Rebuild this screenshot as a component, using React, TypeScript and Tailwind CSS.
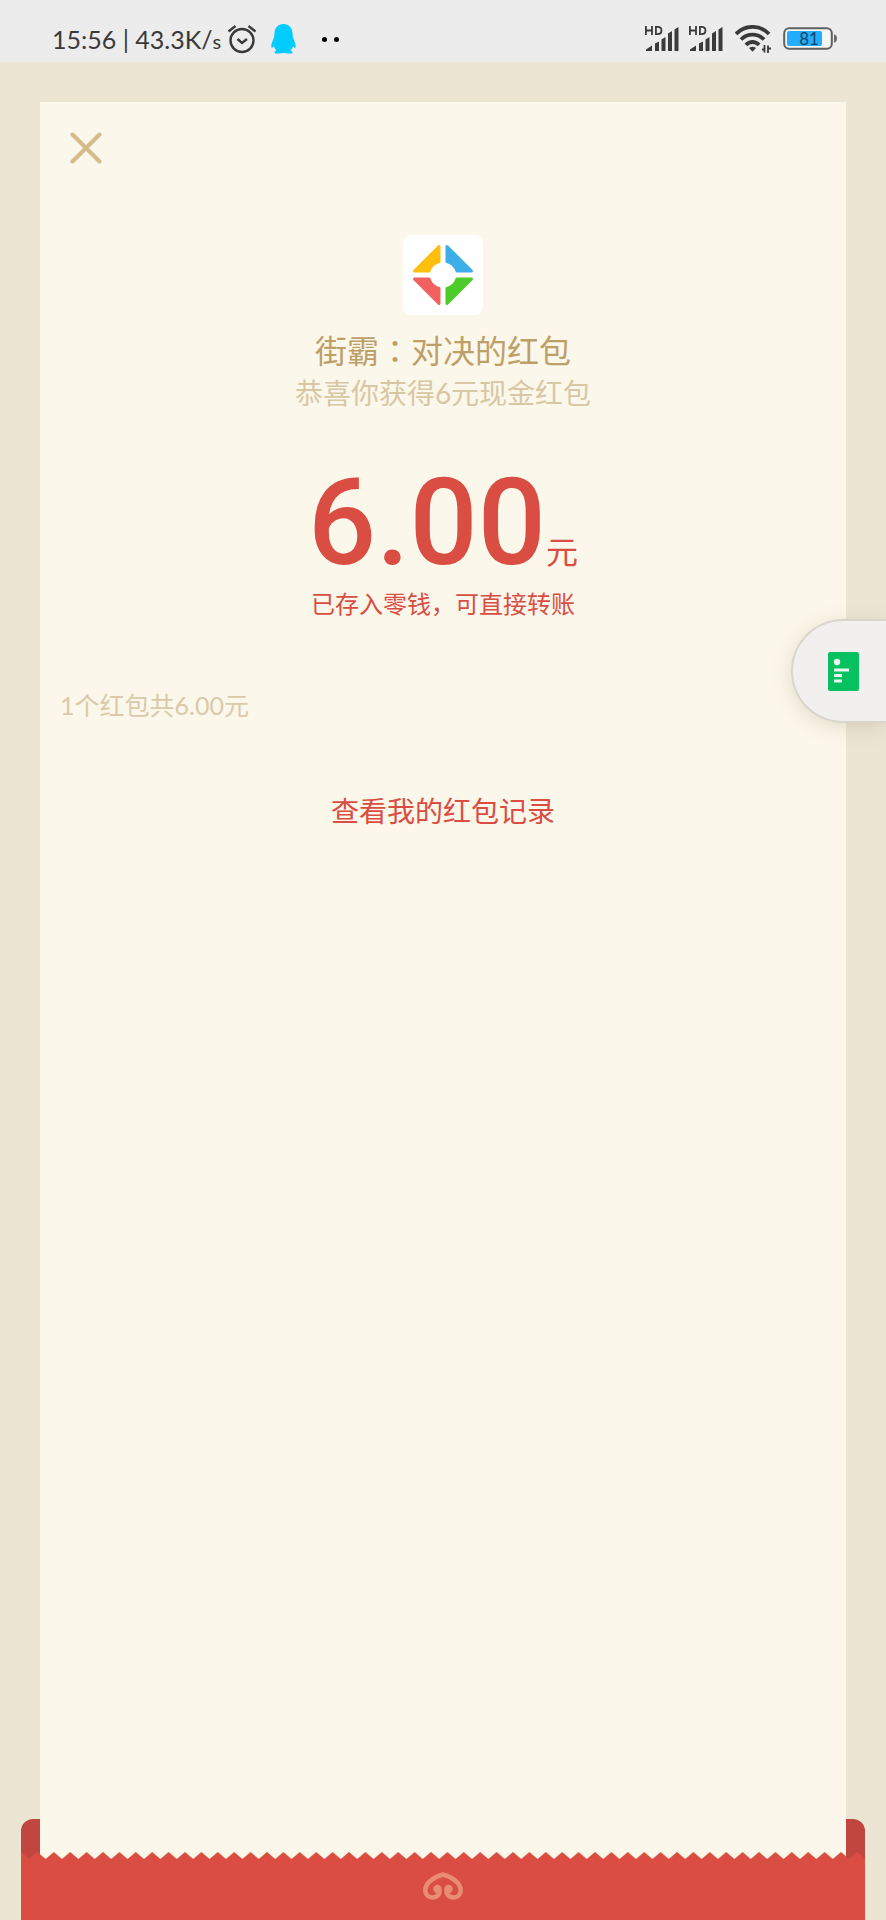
import { FC } from 'react';

const SignalIcon: FC = () => (
  <svg width="34" height="26" viewBox="0 0 34 26" fill="#3a3a3a" aria-hidden="true">
    <g fill="none" stroke="#3a3a3a" strokeWidth="1.800">
      <path d="M.9 0v9M7 0v9M.9 4.500H7M10.900.9v7.200h1.800c5 0 5-7.200 0-7.200z" />
    </g>
    <path d="M1 25v-1.500l6-4V25zM10 17.500l4-2V25h-4zM16.500 13.500l4-2.500V25h-4zM23 7.500L27 5v20h-4zM29.500 3.500l4-2.500v24h-4z" />
  </svg>
);

const WifiIcon: FC = () => (
  <svg width="36" height="28" viewBox="0 0 36 28" fill="none" stroke="#3a3a3a" aria-hidden="true">
    <path
      d="M1 9C10-.5 25-.5 34 9M6 14.500c6.500-6.500 16.500-6.500 23 0M11 20c3.500-4 9.500-4 13 0"
      strokeWidth="3.800"
    />
    <path d="M14 23c2-1.800 5-1.800 7 0l-3.500 3.800z" fill="#3a3a3a" stroke="none" />
    <path d="M27 24.500h3M29.500 20v7.500M33 28v-7.500M33 23.500h3" strokeWidth="1.800" />
  </svg>
);

const BatteryIcon: FC = () => (
  <svg width="55" height="24" viewBox="0 0 55 24" aria-label="81%">
    <rect x="1.200" y="1.200" width="47.600" height="20.600" rx="5" fill="#f6f6f6" stroke="#5f5f5f" strokeWidth="2" />
    <rect x="4" y="4" width="35" height="15" rx="2" fill="#22adff" />
    <path d="M51 7.500c4 0 4 8 0 8z" fill="#6b6b6b" />
    <text x="26" y="18" textAnchor="middle" fontSize="17" fill="#15455f">
      81
    </text>
  </svg>
);

const AlarmIcon: FC = () => (
  <svg width="30" height="30" viewBox="0 0 30 30" fill="none" stroke="#3a3a3a" aria-hidden="true">
    <circle cx="15" cy="16.500" r="11.500" strokeWidth="2.400" />
    <path d="M10.500 15l4.500 4 5-4M1.500 7.500L8.500 2M28.500 7.500l-7-5.500" strokeWidth="2.400" />
  </svg>
);

const PenguinIcon: FC = () => (
  <svg width="25" height="30" viewBox="0 0 25 30" fill="#0cf" aria-hidden="true">
    <path d="M12.500 0C7 0 3.500 4 3.500 9c0 2-.2 4-1.300 6.500C.8 18.500 0 21 .4 23.300c.3 1.200 1.600.2 2.600-1.300.4 1.900 1.300 3.500 2.600 4.500-1.600.5-2.400 1.200-2 2.500.3.800 6.900.8 8.900-.2 2 1 8.600 1 8.900.2.400-1.300-.4-2-2-2.500 1.300-1 2.200-2.600 2.600-4.500 1 1.500 2.300 2.500 2.600 1.300.4-2.300-.4-4.800-1.800-7.800-1.100-2.500-1.300-4.500-1.300-6.500 0-5-3.500-9-9-9z" />
  </svg>
);

const SenderLogo: FC = () => (
  <svg width="62" height="62" viewBox="0 0 62 62" strokeLinejoin="round" strokeWidth="3" aria-hidden="true">
    <path d="M27 2.500v15A15 15 0 0 0 17 27H2.500z" fill="#fdbf0f" stroke="#fdbf0f" />
    <path d="M35 2.500v15A15 15 0 0 1 45 27H59.500z" fill="#3eaee9" stroke="#3eaee9" />
    <path d="M27 59.500v-15A15 15 0 0 1 17 35H2.500z" fill="#f2605f" stroke="#f2605f" />
    <path d="M35 59.500v-15A15 15 0 0 0 45 35H59.500z" fill="#4ccc2b" stroke="#4ccc2b" />
  </svg>
);

const StatusBar: FC = () => (
  <header className="flex h-[62px] items-center justify-between bg-[#ececec] pt-4 pr-12 pl-13 text-[#3a3a3a]">
    <div className="flex items-center">
      <span className="text-[25px] leading-8">
        15:56 | 43.3K/<span className="text-xl">s</span>
      </span>
      <div className="ml-1.5 flex items-center gap-3.5">
        <AlarmIcon />
        <PenguinIcon />
      </div>
      <div className="ml-[26px] flex gap-[7px]">
        <span className="size-[5px] rounded-full bg-black" />
        <span className="size-[5px] rounded-full bg-black" />
      </div>
    </div>

    <div className="flex items-center gap-3">
      <div className="flex gap-2.5">
        <SignalIcon />
        <SignalIcon />
      </div>
      <WifiIcon />
      <BatteryIcon />
    </div>
  </header>
);

const EnvelopeFooter: FC = () => (
  <footer className="mx-[21px]">
    <div className="h-10 rounded-t-xl bg-[#c0463f] px-[19px]">
      <div className="h-full bg-[#fbf7ea]" />
    </div>

    <div className="relative flex h-[61px] justify-center bg-[#d94d42] pt-3">
      {/* torn edge */}
      <svg className="absolute -top-[7px] left-0 h-2 w-full" aria-hidden="true">
        <defs>
          <pattern id="teeth" width="16.4" height="8" patternUnits="userSpaceOnUse">
            <path d="M0 0l8.200 7L16.400 0V8H0z" fill="#d94d42" />
          </pattern>
        </defs>
        <rect width="100%" height="8" fill="url(#teeth)" />
      </svg>

      <svg
        width="42"
        height="30"
        viewBox="0 0 42 30"
        fill="none"
        stroke="#e98d72"
        strokeWidth="4.500"
        strokeLinecap="round"
        aria-hidden="true"
      >
        <path d="M21 3.800C15 4.500 3.500 11 3.300 19c0 5 3.700 7.500 7.200 7.500 5 0 7.500-3.500 7-7" />
        <path d="M21 3.800C27 4.500 38.500 11 38.700 19c0 5-3.700 7.500-7.200 7.500-5 0-7.500-3.500-7-7" />
        <g fill="#e98d72" stroke="none">
          <circle cx="15.500" cy="18" r="4.200" />
          <circle cx="26.500" cy="18" r="4.200" />
        </g>
      </svg>
    </div>
  </footer>
);

const App: FC = () => {
  return (
    <div className="relative flex min-h-screen flex-col overflow-hidden bg-[#ece5d3] font-[Lato,'Noto_Sans_CJK_SC',sans-serif]">
      <StatusBar />

      <main className="mx-10 mt-10 flex flex-1 flex-col bg-[#fbf7ea]">
        <button type="button" aria-label="关闭" className="mt-[30px] ml-[30px] size-8">
          <svg viewBox="0 0 32 32" fill="none" stroke="#d5bb8b" strokeWidth="4" strokeLinecap="round">
            <path d="M2.500 2.500l27 27M29.500 2.500l-27 27" />
          </svg>
        </button>

        <section className="mt-[71px] flex flex-col items-center">
          <div className="flex size-20 items-center justify-center rounded-lg bg-white">
            <SenderLogo />
          </div>
          <h1 className="mt-3 text-[32px] leading-11 text-[#bda068]">
            街霸<span className="font-['Noto_Sans_CJK_TC',sans-serif]">：</span>对决的红包
          </h1>
          <p className="text-[28px] leading-10 text-[#d8c7a4]">恭喜你获得6元现金红包</p>

          <p className="mt-11 flex items-baseline text-[#d94d42]">
            <span className="font-[Roboto,sans-serif] text-[120px] leading-[132px] font-medium">6.00</span>
            <span className="text-[32px] leading-8">元</span>
          </p>
          <p className="text-2xl leading-[30px] text-[#d94d42]">已存入零钱，可直接转账</p>
        </section>

        <p className="mt-[70px] ml-5 text-[25px] leading-8 text-[#dacaa9]">1个红包共6.00元</p>

        <a href="#records" className="mt-[70px] self-center text-[28px] leading-10 text-[#d94d42]">
          查看我的红包记录
        </a>
      </main>

      <EnvelopeFooter />

      {/* floating shortcut docked to the right edge */}
      <button
        type="button"
        aria-label="浮窗"
        className="absolute top-[619px] right-0 flex h-[104px] w-[95px] items-center rounded-l-full border-2 border-r-0 border-[#dad5cd] bg-[#f1f0ef] pl-[35px] shadow-[0_4px_20px_rgba(120,100,60,0.18)]"
      >
        <svg width="31" height="39" viewBox="0 0 31 39" aria-hidden="true">
          <rect width="31" height="39" rx="2" fill="#07c160" />
          <circle cx="9" cy="10" r="3.200" fill="#e6f8ee" />
          <path d="M6 18h15M6 23.500h8M6 29h8" stroke="#e6f8ee" strokeWidth="3" />
        </svg>
      </button>
    </div>
  );
};

export default App;
